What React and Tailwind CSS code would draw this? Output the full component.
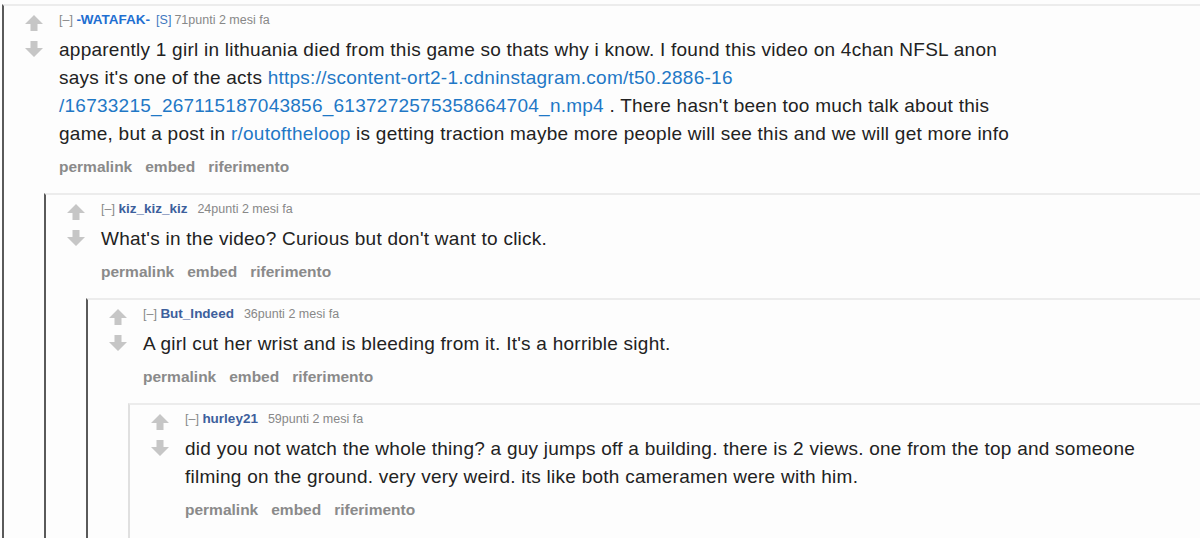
import React from "react";

const Up = () => (
  <svg width="18" height="16" viewBox="0 0 18 16" className="block">
    <path d="M9 0 L18 9 L12.5 9 L12.5 16 L5.5 16 L5.5 9 L0 9 Z" fill="#c6c6c6" />
  </svg>
);
const Down = () => (
  <svg width="18" height="16" viewBox="0 0 18 16" className="block">
    <path d="M9 16 L18 7 L12.5 7 L12.5 0 L5.5 0 L5.5 7 L0 7 Z" fill="#c6c6c6" />
  </svg>
);

const A = ({ children }) => <a className="text-[#1f78c6]">{children}</a>;

const comments = {
  author: "-WATAFAK-",
  submitter: true,
  points: "71punti",
  body: (
    <>
      apparently 1 girl in lithuania died from this game so thats why i know. I found this video on 4chan NFSL anon
      <br />
      says it's one of the acts <A>https://scontent-ort2-1.cdninstagram.com/t50.2886-16</A>
      <br />
      <A>/16733215_267115187043856_6137272575358664704_n.mp4</A> . There hasn't been too much talk about this
      <br />
      game, but a post in <A>r/outoftheloop</A> is getting traction maybe more people will see this and we will get more info
    </>
  ),
  child: {
    author: "kiz_kiz_kiz",
    points: "24punti",
    body: <>What's in the video? Curious but don't want to click.</>,
    child: {
      author: "But_Indeed",
      points: "36punti",
      body: <>A girl cut her wrist and is bleeding from it. It's a horrible sight.</>,
      child: {
        author: "hurley21",
        points: "59punti",
        light: true,
        body: (
          <>
            did you not watch the whole thing? a guy jumps off a building. there is 2 views. one from the top and someone
            <br />
            filming on the ground. very very weird. its like both cameramen were with him.
          </>
        ),
      },
    },
  },
};

function Comment({ c }) {
  return (
    <div
      className={
        "border-t-2 border-t-[#ececec] border-l-2 bg-[#fdfdfd] " +
        (c.light ? "border-l-[#e0e0e0]" : "border-l-[#5a5a5a]")
      }
    >
      <div className="flex">
        <div className="w-[55px] shrink-0 flex flex-col items-center pt-[9px] pl-[5px] gap-[10px]">
          <Up />
          <Down />
        </div>
        <div className="flex-1 pt-[6px]">
          <div className="text-[12.5px] leading-4 text-[#888]">
            <span>[–] </span>
            <span className={"text-[13.5px] font-bold " + (c.submitter ? "text-[#1f6fd1]" : "text-[#3d5f9c]")}>
              {c.author}
            </span>
            {c.submitter && <span className="text-[#3f78c0] ml-[6px]">[S]</span>}
            <span className={c.submitter ? "ml-[3px]" : "ml-[10px]"}>{c.points} 2 mesi fa</span>
          </div>
          <div className="mt-[8px] text-[19px] tracking-[0.25px] leading-[28px] text-[#222] whitespace-nowrap">
            {c.body}
          </div>
          <div className="mt-[9px] mb-[16px] text-[15.5px] leading-5 font-bold text-[#8a8a8a] flex gap-[13px]">
            <span>permalink</span>
            <span>embed</span>
            <span>riferimento</span>
          </div>
        </div>
      </div>
      {c.child && (
        <div className="ml-[40px]">
          <Comment c={c.child} />
        </div>
      )}
      {!c.child && <div className="h-[16px]" />}
    </div>
  );
}

export default function App() {
  return (
    <div
      className="w-[1200px] h-[538px] overflow-hidden bg-[#fdfdfd] pt-[4px] pl-[2px]"
      style={{ fontFamily: '"Liberation Sans", Arial, sans-serif' }}
    >
      <Comment c={comments} />
    </div>
  );
}
